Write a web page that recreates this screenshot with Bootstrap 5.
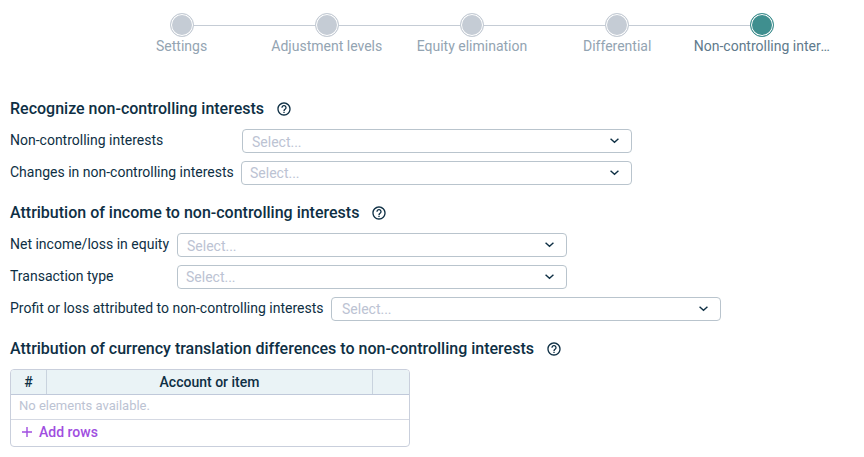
<!DOCTYPE html>
<html lang="en">
<head>
    <meta charset="UTF-8">
    <meta name="viewport" content="width=device-width, initial-scale=1.0">
    <title>Non-controlling interests</title>
    <link href="https://cdn.jsdelivr.net/npm/bootstrap@5.3.0/dist/css/bootstrap.min.css" rel="stylesheet">
    <style>
        body {
            font-family: Roboto, "Liberation Sans", sans-serif;
            font-size: 14px;
            line-height: 20px;
            color: #0e2f44;
            background: #fff;
            overflow: hidden;
        }
        .page-wrap { padding: 13px 10px 0; }

        /* Stepper */
        .stepper { margin-left: 99px; width: 726px; height: 58px; }
        .step { flex: 0 0 145.2px; width: 145.2px; position: relative; }
        .step-dot {
            width: 24px;
            height: 24px;
            border-radius: 50%;
            background: #c5ccd5;
            border: 1px solid #c5ccd5;
            box-shadow: inset 0 0 0 1px #fff;
            position: relative;
            z-index: 1;
        }
        .step-line {
            position: absolute;
            top: 12px;
            left: 50%;
            width: 100%;
            height: 1px;
            background: #c5ccd5;
        }
        .step-label {
            margin-top: -1px;
            width: 100%;
            padding: 0 4px;
            text-align: center;
            color: #93a4b2;
            white-space: nowrap;
            overflow: hidden;
            text-overflow: ellipsis;
        }
        .step-active .step-dot { background: #3f8f8f; border-color: #3f8f8f; }
        .step-active .step-label { color: #607a8c; }

        /* Form */
        .sect-head { display: flex; align-items: center; margin-top: 18px; }
        .sect-first { margin-top: 28px; }
        .sect-title {
            font-size: 16px;
            font-weight: 500;
            line-height: 20px;
            margin: 0;
            color: #0e2f44;
        }
        .help-ico { width: 16px; height: 16px; margin-left: 12px; flex: none; }
        .field-row { display: flex; align-items: center; height: 24px; margin-top: 8px; }
        .sect-head + .field-row { margin-top: 10px; }
        .field-label { flex: none; margin-top: -2px; }
        .w-232 { width: 232px; }
        .w-231 { width: 231px; }
        .w-167 { width: 167px; }
        .w-321 { width: 321px; }
        .fake-select {
            width: 390px;
            height: 24px;
            border: 1px solid #b9c4cd;
            border-radius: 4px;
            padding: 0 11px 0 9px;
            display: flex;
            align-items: center;
            justify-content: space-between;
            background: #fff;
        }
        .fake-select span { color: #bcc3d3; }
        .sel-low span { margin-top: 2px; }
        .sel-wide { width: 391px; padding-left: 8px; }
        .sel-tight { padding-left: 8px; }
        .sel-loose { padding-left: 10px; }
        .chev { width: 11px; height: 7px; margin-top: -1px; }

        /* Grid table */
        .grid-box {
            width: 400px;
            border: 1px solid #c9cfdc;
            border-radius: 4px;
            overflow: hidden;
            margin-top: 10px;
        }
        .grid-head { background: #eaf3f6; height: 25px; border-bottom: 1px solid #c0c9da; font-weight: 500; line-height: 24px; }
        .col-num { width: 36px; text-align: center; border-right: 1px solid #c9d3de; }
        .col-acc { flex: 1; text-align: center; border-right: 1px solid #c9d3de; }
        .col-end { width: 36px; }
        .grid-empty { height: 25px; line-height: 21px; padding-left: 8px; color: #bcc3d3; font-size: 13px; border-bottom: 1px solid #d5d9e3; }
        .grid-add { height: 26px; padding-left: 10px; padding-bottom: 2px; color: #a04ee0; font-weight: 500; }
        .grid-add svg { width: 12px; height: 12px; margin-right: 6px; }
    </style>
</head>
<body>
<div class="page-wrap">

    <div class="stepper d-flex">
        <div class="step d-flex flex-column align-items-center">
            <div class="step-line"></div>
            <div class="step-dot"></div>
            <div class="step-label">Settings</div>
        </div>
        <div class="step d-flex flex-column align-items-center">
            <div class="step-line"></div>
            <div class="step-dot"></div>
            <div class="step-label">Adjustment levels</div>
        </div>
        <div class="step d-flex flex-column align-items-center">
            <div class="step-line"></div>
            <div class="step-dot"></div>
            <div class="step-label">Equity elimination</div>
        </div>
        <div class="step d-flex flex-column align-items-center">
            <div class="step-line"></div>
            <div class="step-dot"></div>
            <div class="step-label">Differential</div>
        </div>
        <div class="step step-active d-flex flex-column align-items-center">
            <div class="step-dot"></div>
            <div class="step-label">Non-controlling interests</div>
        </div>
    </div>

    <div class="sect-head sect-first">
        <h2 class="sect-title">Recognize non-controlling interests</h2>
        <svg class="help-ico" viewBox="0 0 24 24" fill="#0e2f44"><path d="M11 18h2v-2h-2v2zm1-16C6.48 2 2 6.48 2 12s4.48 10 10 10 10-4.48 10-10S17.52 2 12 2zm0 18c-4.41 0-8-3.59-8-8s3.59-8 8-8 8 3.59 8 8-3.59 8-8 8zm0-14c-2.21 0-4 1.79-4 4h2c0-1.1.9-2 2-2s2 .9 2 2c0 2-3 1.75-3 5h2c0-2.25 3-2.5 3-5 0-2.21-1.79-4-4-4z"/></svg>
    </div>
    <div class="field-row">
        <div class="field-label w-232">Non-controlling interests</div>
        <div class="fake-select sel-low"><span>Select...</span><svg class="chev" viewBox="0 0 12 8" fill="none" stroke="#0e2f44" stroke-width="1.6"><path d="M1.5 2 6 6l4.5-4"/></svg></div>
    </div>
    <div class="field-row">
        <div class="field-label w-231">Changes in non-controlling interests</div>
        <div class="fake-select sel-wide"><span>Select...</span><svg class="chev" viewBox="0 0 12 8" fill="none" stroke="#0e2f44" stroke-width="1.6"><path d="M1.5 2 6 6l4.5-4"/></svg></div>
    </div>

    <div class="sect-head">
        <h2 class="sect-title">Attribution of income to non-controlling interests</h2>
        <svg class="help-ico" viewBox="0 0 24 24" fill="#0e2f44"><path d="M11 18h2v-2h-2v2zm1-16C6.48 2 2 6.48 2 12s4.48 10 10 10 10-4.48 10-10S17.52 2 12 2zm0 18c-4.41 0-8-3.59-8-8s3.59-8 8-8 8 3.59 8 8-3.59 8-8 8zm0-14c-2.21 0-4 1.79-4 4h2c0-1.1.9-2 2-2s2 .9 2 2c0 2-3 1.75-3 5h2c0-2.25 3-2.5 3-5 0-2.21-1.79-4-4-4z"/></svg>
    </div>
    <div class="field-row">
        <div class="field-label w-167">Net income/loss in equity</div>
        <div class="fake-select sel-low"><span>Select...</span><svg class="chev" viewBox="0 0 12 8" fill="none" stroke="#0e2f44" stroke-width="1.6"><path d="M1.5 2 6 6l4.5-4"/></svg></div>
    </div>
    <div class="field-row">
        <div class="field-label w-167">Transaction type</div>
        <div class="fake-select sel-tight"><span>Select...</span><svg class="chev" viewBox="0 0 12 8" fill="none" stroke="#0e2f44" stroke-width="1.6"><path d="M1.5 2 6 6l4.5-4"/></svg></div>
    </div>
    <div class="field-row">
        <div class="field-label w-321">Profit or loss attributed to non-controlling interests</div>
        <div class="fake-select sel-loose"><span>Select...</span><svg class="chev" viewBox="0 0 12 8" fill="none" stroke="#0e2f44" stroke-width="1.6"><path d="M1.5 2 6 6l4.5-4"/></svg></div>
    </div>

    <div class="sect-head">
        <h2 class="sect-title">Attribution of currency translation differences to non-controlling interests</h2>
        <svg class="help-ico" viewBox="0 0 24 24" fill="#0e2f44"><path d="M11 18h2v-2h-2v2zm1-16C6.48 2 2 6.48 2 12s4.48 10 10 10 10-4.48 10-10S17.52 2 12 2zm0 18c-4.41 0-8-3.59-8-8s3.59-8 8-8 8 3.59 8 8-3.59 8-8 8zm0-14c-2.21 0-4 1.79-4 4h2c0-1.1.9-2 2-2s2 .9 2 2c0 2-3 1.75-3 5h2c0-2.25 3-2.5 3-5 0-2.21-1.79-4-4-4z"/></svg>
    </div>
    <div class="grid-box">
        <div class="grid-head d-flex">
            <div class="col-num">#</div>
            <div class="col-acc">Account or item</div>
            <div class="col-end"></div>
        </div>
        <div class="grid-empty">No elements available.</div>
        <div class="grid-add d-flex align-items-center">
            <svg viewBox="0 0 12 12" fill="none" stroke="#a04ee0" stroke-width="1.4"><path d="M6 1v10M1 6h10"/></svg>
            Add rows
        </div>
    </div>
</div>
<script src="https://cdn.jsdelivr.net/npm/bootstrap@5.3.0/dist/js/bootstrap.bundle.min.js"></script>
</body>
</html>
